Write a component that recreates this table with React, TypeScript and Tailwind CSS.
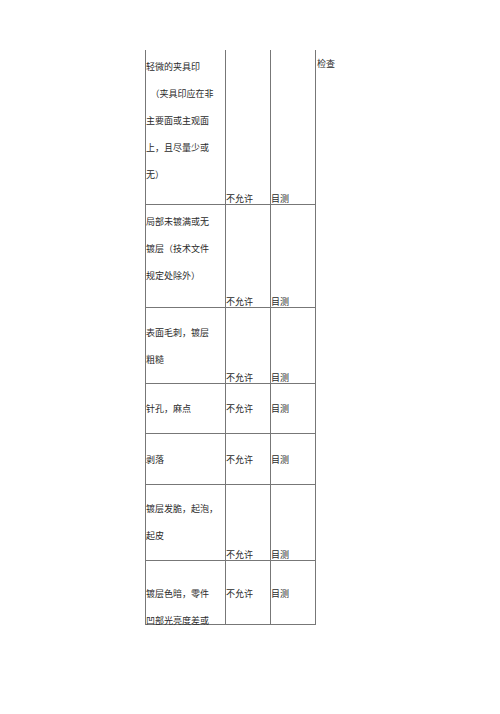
import React from "react";

type Row = {
  h: number;
  pt: number;
  lines: string[];
  bottom: boolean; // status at bottom of cell
};

const rows: Row[] = [
  { h: 155, pt: 2.5, lines: ["轻微的夹具印", "\u3000（夹具印应在非", "主要面或主观面", "上，且尽量少或", "无）"], bottom: true },
  { h: 103, pt: 2.5, lines: ["局部未镀满或无", "镀层（技术文件", "规定处除外）"], bottom: true },
  { h: 76, pt: 10.5, lines: ["表面毛刺，镀层", "粗糙"], bottom: true },
  { h: 50, pt: 10.5, lines: ["针孔，麻点"], bottom: false },
  { h: 51, pt: 11.5, lines: ["剥落"], bottom: false },
  { h: 76, pt: 9.5, lines: ["镀层发脆，起泡，", "起皮"], bottom: true },
  { h: 64, pt: 18.5, lines: ["镀层色暗，零件", "凹部光亮度差或"], bottom: false },
];

export default function App() {
  return (
    <div
      className="w-[500px] h-[714px] bg-white text-[#2a2a2a] text-[9px] overflow-hidden"
      style={{ fontFamily: '"Noto Sans CJK SC", "Noto Sans", sans-serif' }}
    >
      <div className="flex pt-[50px] pl-[145px]">
        <div className="w-[171px] border-l border-r border-[#777] flex flex-col">
          {rows.map((r, i) => (
            <div
              key={i}
              className="flex border-b border-[#777]"
              style={{ height: r.h }}
            >
              <div
                className="w-[80px] border-r border-[#777] leading-[27px] whitespace-nowrap"
                style={{ paddingTop: r.pt }}
              >
                {r.lines.map((l, j) => (
                  <div key={j}>{l}</div>
                ))}
              </div>
              {r.bottom ? (
                <>
                  <div className="w-[45px] border-r border-[#777] flex flex-col justify-end leading-[11px]">
                    <div>不允许</div>
                  </div>
                  <div className="flex-1 flex flex-col justify-end leading-[11px]">
                    <div>目测</div>
                  </div>
                </>
              ) : (
                <>
                  <div
                    className="w-[45px] border-r border-[#777] leading-[27px]"
                    style={{ paddingTop: r.pt }}
                  >
                    不允许
                  </div>
                  <div className="flex-1 leading-[27px]" style={{ paddingTop: r.pt }}>
                    目测
                  </div>
                </>
              )}
            </div>
          ))}
        </div>
        <div className="leading-[27px] pl-[1px]">检查</div>
      </div>
    </div>
  );
}
